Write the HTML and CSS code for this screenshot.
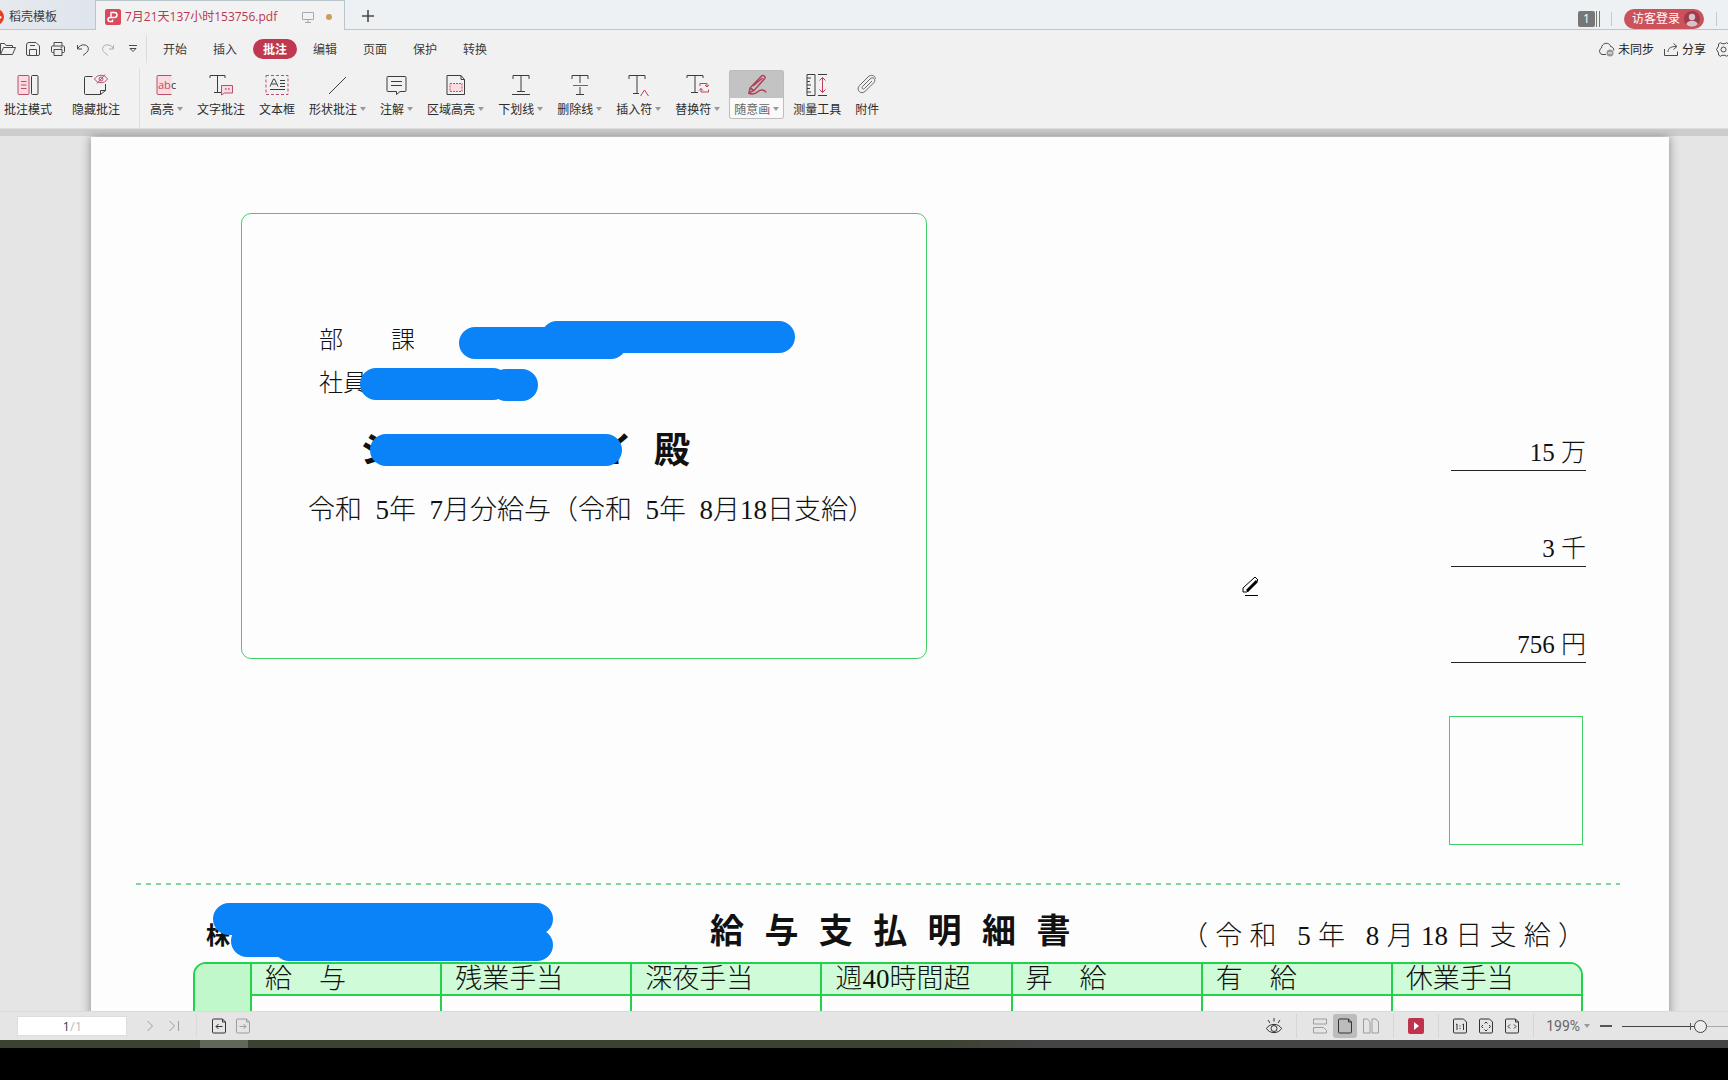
FILE: index.html
```html
<!DOCTYPE html>
<html lang="zh-CN">
<head>
<meta charset="utf-8">
<title>7月21天137小时153756.pdf</title>
<link rel="stylesheet" href="styles.css">
</head>
<body>
<header class="tabbar">
  <button class="tab home"><svg width="4" height="16" viewBox="12 0 4 16"><circle cx="8" cy="8" r="8" fill="#e8401c"/><path d="M12 7l2 1-2 2" fill="#fff"/></svg>稻壳模板</button>
  <button class="tab file">
    <svg width="16" height="16" viewBox="0 0 16 16"><rect width="16" height="16" rx="2" fill="#d94a5c"/><path d="M6 8.500V3.500h3.500a2.500 2.500 0 0 1 0 5H5a2 2 0 0 0 0 4h2.500V10.500" fill="none" stroke="#fff" stroke-width="1.400"/></svg>
    <span class="name">7月21天137小时153756.pdf</span>
    <svg class="screen" width="12" height="12" viewBox="0 0 12 12" fill="none" stroke="#a3a9b0"><path d="M.5 1.500h11v7H.5zM6 8.500v2.500M3 11.500h6"/></svg>
    <i class="dot"></i>
  </button>
  <button class="add" aria-label="新建"><svg width="12" height="12" viewBox="0 0 12 12" stroke="#4a4a4a" stroke-width="1.600"><path d="M6 0v12M0 6h12"/></svg></button>
  <div class="account">
    <span class="count">1</span><i class="bars"></i>
    <i class="vline"></i>
    <button class="login">访客登录<svg width="16" height="16" viewBox="0 0 16 16"><circle cx="8" cy="8" r="8" fill="#a03a50"/><circle cx="8" cy="6" r="3.200" fill="#d9c3cb"/><path d="M2.500 13.500c0-5 11-5 11 0a8 8 0 0 1-11 0z" fill="#d9c3cb"/></svg></button>
    <i class="vline last"></i>
  </div>
</header>

<nav class="menubar">
  <div class="quick">
    <button aria-label="打开"><svg width="16" height="14" viewBox="0 0 16 14"><path d="M.5 12.500V1.500h4l1.500 2h6.500v2M.5 12.500l3-7h12l-3 7z"/></svg></button>
    <button aria-label="保存"><svg width="14" height="14" viewBox="0 0 14 14"><path d="M3 .5h7l3.500 3.500v8a1.500 1.500 0 0 1-1.500 1.500H2A1.500 1.500 0 0 1 .5 12V3A2.500 2.500 0 0 1 3 .5zM4 3.500h5M3.500 13V7.500h7V13"/></svg></button>
    <button aria-label="打印"><svg width="14" height="14" viewBox="0 0 14 14"><path d="M3 4V.5h8V4M3 10.500H1.500a1 1 0 0 1-1-1V5a1 1 0 0 1 1-1h11a1 1 0 0 1 1 1v4.500a1 1 0 0 1-1 1H11M3 7.500h8v6H3zM9.500 5.800h2"/></svg></button>
    <button aria-label="撤销"><svg width="12" height="13" viewBox="0 0 12 13"><path d="M.5 2v4H5M.8 5.500C3 .5 11 .8 11.400 5.500 11.600 9 8.500 10 6 12.500"/></svg></button>
    <button class="off" aria-label="恢复"><svg width="12" height="13" viewBox="0 0 12 13"><path d="M11.500 2v4H7M11.200 5.500C9 .5 1 .8.600 5.500.400 9 3.500 10 6 12.500"/></svg></button>
    <button aria-label="更多"><svg width="8" height="8" viewBox="0 0 8 8"><path d="M0 .5h8M1 3.500h6l-3 3z"/></svg></button>
  </div>
  <div class="menus">
    <button>开始</button><button>插入</button><button class="on">批注</button><button>编辑</button><button>页面</button><button>保护</button><button>转换</button>
  </div>
  <div class="share">
    <button><svg width="17" height="15" viewBox="0 0 17 15"><path d="M8 12.500H4a3.500 3.500 0 0 1-.5-6.500C4 0 12 0 12.500 4.500c2.500.3 3.500 2 3.200 4"/><circle cx="12" cy="11" r="3.500" fill="#999" stroke="none"/><path d="M10 11h4" stroke="#fff"/></svg>未同步</button>
    <button><svg width="15" height="13" viewBox="0 0 15 13"><path d="M.5 6v6.500h13V8.500M4 9c0-4 3-5.500 8-5.500M9.500.5l3.500 3-3.500 3"/></svg>分享</button>
    <button class="gear" aria-label="设置"><svg width="15" height="15" viewBox="0 0 15 15"><path d="M4.500.7l1.500 1h3l1.500-1 2 1.300v2.200L14.500 7.500l-2 3.300v2.200l-2 1.300-1.500-1H6l-1.500 1-2-1.300v-2.200L.5 7.500l2-3.300V2z"/><circle cx="7.500" cy="7.500" r="2.500"/></svg></button>
  </div>
</nav>

<section class="ribbon">
  <div class="group">
    <button class="tool"><svg width="22" height="22" viewBox="0 0 22 22"><rect x="1" y="1.500" width="11" height="19" rx="1" fill="#fbdbe1" stroke="#b8506a"/><path d="M4 7.500h5.500M4 11h5.500M4 14.500h5.500" stroke="#b8506a"/><rect x="14.500" y="1.500" width="6.500" height="19" rx="1"/></svg><span>批注模式</span></button>
    <button class="tool"><svg width="24" height="22" viewBox="0 0 24 22"><path d="M8.500 2.500H1.500a1 1 0 0 0-1 1v16a1 1 0 0 0 1 1h15l5-4V10M16.500 20.500v-4h5"/><g stroke="#b8506a"><path d="M10.500 5c3-5 10-5 13 0-3 5-10 5-13 0zM13 9.500L21 .5"/><circle cx="17" cy="5" r="2"/></g></svg><span>隐藏批注</span></button>
  </div>
  <div class="group">
    <button class="tool"><svg width="22" height="22" viewBox="0 0 22 22"><path d="M15.500 1.500H2a1 1 0 0 0-1 1v17a1 1 0 0 0 1 1h13.500" fill="#fbdbe1" stroke="#b8506a"/><text x="2" y="15" class="abc" fill="#b8506a">ab</text><text x="15" y="15" class="abc" fill="#333">c</text></svg><span>高亮<i class="caret"></i></span></button>
    <button class="tool"><svg width="24" height="22" viewBox="0 0 24 22"><path d="M1 4V1.500h15V4M8.500 1.500v17M5 18.500h7"/><path d="M12.500 11.500h11v7.500h-8l-3 2z" fill="#fbdbe1" stroke="#b8506a"/><path d="M16 15h1.500M19 15h1.500" stroke="#b8506a" stroke-width="1.500"/></svg><span>文字批注</span></button>
    <button class="tool"><svg width="24" height="22" viewBox="0 0 24 22"><rect x="1" y="1.500" width="22" height="19" stroke="#b8506a" stroke-dasharray="3 2"/><path d="M5 12.500L8.500 5h1L13 12.500M6.500 10h5M15 6.500h5M15 9.500h5M15 12.500h5M5 15.500h15"/></svg><span>文本框</span></button>
    <button class="tool"><svg width="20" height="22" viewBox="0 0 20 22"><path d="M1 20L18 3"/></svg><span>形状批注<i class="caret"></i></span></button>
    <button class="tool"><svg width="22" height="22" viewBox="0 0 22 22"><path d="M2 2.500h17a1 1 0 0 1 1 1v13a1 1 0 0 1-1 1h-5l-3.500 3v-3H2a1 1 0 0 1-1-1v-13a1 1 0 0 1 1-1zM5 7.500h11M5 11.500h11"/></svg><span>注解<i class="caret"></i></span></button>
    <button class="tool"><svg width="20" height="22" viewBox="0 0 20 22"><path d="M1 1.500h14l3.500 4v15H1zM15 1.500v4h3.500"/><rect x="4" y="9.500" width="12" height="8" fill="#fbdbe1" stroke="#b8506a" stroke-dasharray="2 1"/></svg><span>区域高亮<i class="caret"></i></span></button>
    <button class="tool"><svg width="18" height="22" viewBox="0 0 18 22"><path d="M1 5V1.500h16V5M9 1.500v16M5 17.500h8M0 20.500h18"/></svg><span>下划线<i class="caret"></i></span></button>
    <button class="tool"><svg width="18" height="22" viewBox="0 0 18 22"><path d="M1 5V1.500h16V5M9 1.500V9M9 13v7M5 20.500h8"/><path d="M2 11.500h15" stroke="#c43c55"/></svg><span>删除线<i class="caret"></i></span></button>
    <button class="tool"><svg width="22" height="22" viewBox="0 0 22 22"><path d="M1 5V1.500h16V5M9 1.500v18M5 19.500h6"/><path d="M12.500 22l4-6 4 6" stroke="#c43c55"/></svg><span>插入符<i class="caret"></i></span></button>
    <button class="tool"><svg width="24" height="22" viewBox="0 0 24 22"><path d="M1 4V1.500h16V4M9 1.500v17M5 18.500h7"/><path d="M14 12V9.500h7V13M19 11l2 2 2-2M22.500 15.500V18H15v-3.500M13 16.500l2-2 2 2" stroke="#c43c55"/></svg><span>替换符<i class="caret"></i></span></button>
    <button class="tool picked"><svg width="22" height="22" viewBox="0 0 22 22"><path d="M3 19l1-5L15.500 2c2-1.500 4.500.5 3 2.800L8 16.500zM4 14l4 2.500M7 12L16.500 4M3 19.500c4 1 7 0 9-2 3-2.500 7-2 8 1" fill="none" stroke="#b0405a" stroke-width="1.500"/></svg><span>随意画<i class="caret"></i></span></button>
    <button class="tool"><svg width="22" height="22" viewBox="0 0 22 22"><path d="M1 .5h8v21H1zM1 4h4M1 7.500h3M1 11h4M1 14.500h3M1 18h4M12 .5h9M12 21.500h9"/><path d="M16.500 3.500v15M13.500 6.500l3-3 3 3M13.500 15.500l3 3 3-3" stroke="#c43c55"/></svg><span>测量工具</span></button>
    <button class="tool"><svg width="20" height="22" viewBox="0 0 20 22"><path d="M15 7l-7.500 7.500c-1.500 1.500-3.500-.5-2-2L13 5c3-3 6.500.5 4 3.500L8.500 17C4 21.500-1.500 16 2.500 11.500L11 3c3-3 7-1.500 7.500 1.500" stroke="#666"/></svg><span>附件</span></button>
  </div>
</section>

<main class="workspace">
  <article class="page" lang="ja">
    <section class="upper">
      <div class="addressee">
        <p class="line">部　　課</p>
        <p class="line">社員</p>
        <p class="person"><span>シ</span><span>イ</span><span>殿</span></p>
        <p class="period">令和&ensp;5年&ensp;7月分給与（令和&ensp;5年&ensp;8月18日支給）</p>
      </div>
      <div class="sums">
        <p class="sum">15 万</p>
        <p class="sum">3 千</p>
        <p class="sum">756 円</p>
        <div class="stamp"></div>
      </div>
    </section>
    <div class="cut"></div>
    <div class="slip-head">
      <p class="company">株</p>
      <h1 class="title">給 与 支 払 明 細 書</h1>
      <p class="paid">（令和&ensp;5年&ensp;8月18日支給）</p>
    </div>
    <table class="slip">
      <thead>
        <tr><td class="side" rowspan="2"></td><th>給　与</th><th>残業手当</th><th>深夜手当</th><th>週40時間超</th><th>昇　給</th><th>有　給</th><th>休業手当</th></tr>
        <tr class="values"><td></td><td></td><td></td><td></td><td></td><td></td><td></td></tr>
      </thead>
    </table>
    <svg class="ink" width="1578" height="874" viewBox="91 137 1578 874" aria-hidden="true">
      <path d="M475 343H611M557 337H779M376 384H493M506 385H522M386 450H606M229 919H537M247 941H290M289 945H537" fill="none" stroke="#0a82f8" stroke-width="32" stroke-linecap="round"/>
      <g><path d="M1243 592v-4l12-11 3 3-11 12z" fill="#fff" stroke="#000"/><path d="M1247 591l10-10" stroke="#000" stroke-width="3"/><path d="M1245 595.500h13" stroke="#000"/></g>
    </svg>
  </article>
</main>

<footer class="status">
  <label class="pageno"><input type="text" value="1" aria-label="页码">/1</label>
  <div class="turn">
    <button class="off" aria-label="下一页"><svg width="6" height="12" viewBox="0 0 6 12"><path d="M.5 1l5 5-5 5"/></svg></button>
    <button class="off" aria-label="末页"><svg width="10" height="12" viewBox="0 0 10 12"><path d="M.5 1l5 5-5 5M9.500 1v10"/></svg></button>
  </div>
  <div class="history">
    <button aria-label="后退"><svg width="14" height="16" viewBox="0 0 14 16"><path d="M1.500 1h9l3 3v10a1 1 0 0 1-1 1h-11a1 1 0 0 1-1-1V2a1 1 0 0 1 1-1zM10.500 1v3h3M4 8.500h6.500M6.500 6L4 8.500 6.500 11"/></svg></button>
    <button class="off" aria-label="前进"><svg width="14" height="16" viewBox="0 0 14 16"><path d="M1.500 1h9l3 3v10a1 1 0 0 1-1 1h-11a1 1 0 0 1-1-1V2a1 1 0 0 1 1-1zM10.500 1v3h3M3.500 8.500H10M7.500 6l2.500 2.500L7.500 11"/></svg></button>
  </div>
  <div class="views">
    <div class="set eye"><button aria-label="护眼"><svg width="16" height="16" viewBox="0 0 16 16"><path d="M.5 10.500c3-5.500 12-5.500 15 0-3 5.500-12 5.500-15 0zM8 0v3.500M2 2l2 3M14 2l-2 3"/><circle cx="8" cy="10.500" r="3"/></svg></button></div>
    <div class="set modes">
      <button class="off" aria-label="连续"><svg width="14" height="16" viewBox="0 0 14 16"><path d="M.5 1h13v5H.5zM.5 9.500h10l3 3V15H.5z"/></svg></button>
      <button class="sel" aria-label="单页"><svg width="14" height="16" viewBox="0 0 14 16"><path d="M1.500 1h9l3 3v10a1 1 0 0 1-1 1h-11a1 1 0 0 1-1-1V2a1 1 0 0 1 1-1zM10.500 1v3h3"/></svg></button>
      <button class="off" aria-label="双页"><svg width="16" height="16" viewBox="0 0 16 16"><path d="M.5 1h4L7 4v11H.5zM9 1h4l2.500 3v11H9z"/></svg></button>
    </div>
    <div class="set play"><button aria-label="播放"><svg width="16" height="16" viewBox="0 0 16 16"><rect width="16" height="16" rx="2" fill="#c0334c" stroke="none"/><path d="M6 4l5 4-5 4z" fill="#fff" stroke="none"/></svg></button></div>
    <div class="set fit">
      <button aria-label="实际大小"><svg width="14" height="16" viewBox="0 0 14 16"><path d="M1.500 1h9l3 3v10a1 1 0 0 1-1 1h-11a1 1 0 0 1-1-1V2a1 1 0 0 1 1-1zM3 6.500l1-.5v6M9.500 6.500l1-.5v6M7 7.500v1M7 10v1"/></svg></button>
      <button aria-label="适合页面"><svg width="14" height="16" viewBox="0 0 14 16"><path d="M1.500 1h9l3 3v10a1 1 0 0 1-1 1h-11a1 1 0 0 1-1-1V2a1 1 0 0 1 1-1zM5.500 5.500L7 4l1.500 1.500M5.500 11.500L7 13l1.500-1.500M4 7L2.500 8.500 4 10M10 7l1.500 1.500L10 10"/></svg></button>
      <button aria-label="适合宽度"><svg width="14" height="16" viewBox="0 0 14 16"><path d="M1.500 1h9l3 3v10a1 1 0 0 1-1 1h-11a1 1 0 0 1-1-1V2a1 1 0 0 1 1-1zM10.500 1v3h3M5 6.500L3 8.500l2 2M9 6.500l2 2-2 2"/></svg></button>
    </div>
    <div class="zoom">
      <button class="percent">199%<i class="caret"></i></button>
      <button aria-label="缩小"><svg width="12" height="4" viewBox="0 0 12 4"><path d="M0 2h12" stroke="#555" stroke-width="2"/></svg></button>
      <input class="slider" type="range" min="0" max="100" value="77" aria-label="缩放">
    </div>
  </div>
</footer>
<div class="taskbar"><i></i></div>
</body>
</html>
```
FILE: styles.css
```css
* { box-sizing: border-box; }
html, body { height: 100%; }
body {
  margin: 0;
  display: flex;
  flex-direction: column;
  overflow: hidden;
  padding-bottom: 32px;
  background: #000;
  color: #3c3c3c;
  font: 12px/16px "Open Sans", "Noto Sans CJK SC", sans-serif;
}
button {
  display: flex;
  align-items: center;
  justify-content: center;
  flex: none;
  margin: 0;
  padding: 0;
  border: 0;
  background: none;
  color: inherit;
  font: inherit;
  white-space: nowrap;
}
svg { display: block; flex: none; }
p, h1 { margin: 0; }
.caret {
  display: inline-block;
  flex: none;
  margin-left: 4px;
  border: 3px solid transparent;
  border-top: 4px solid #999;
  border-bottom: 0;
  vertical-align: 3px;
}

/* Document tabs */
.tabbar {
  display: flex;
  flex: none;
  height: 30px;
  background: #eef1f3;
  box-shadow: inset 0 -1px #b9c6cc;
}
.home {
  width: 95px;
  height: 29px;
  padding-top: 4px;
  justify-content: flex-start;
  gap: 5px;
  background: linear-gradient(90deg, #e6e9ee, #dfe5ed);
}
.file {
  width: 250px;
  padding: 2px 12px 0 9px;
  justify-content: flex-start;
  gap: 4px;
  border: 1px solid #b9c6cc;
  border-bottom: 0;
  background: #f2f2f3;
  color: #b8384e;
}
.screen { margin-left: auto; }
.dot {
  width: 6px;
  height: 6px;
  margin-left: 8px;
  border-radius: 50%;
  background: #c9a054;
}
.add { width: 46px; padding-top: 2px; }
.account {
  display: flex;
  align-items: center;
  margin-left: auto;
  padding: 8px 11px 0 0;
}
.count {
  width: 17px;
  height: 16px;
  border-radius: 2px;
  background: #777;
  color: #fff;
  text-align: center;
}
.bars {
  width: 4px;
  height: 16px;
  border: solid #777;
  border-width: 0 1px;
  margin: 0 11px 0 1px;
}
.vline { width: 1px; height: 14px; background: #c3cace; margin-right: 12px; }
.vline.last { margin: 0 0 0 12px; }
.login {
  width: 80px;
  height: 20px;
  padding-left: 4px;
  gap: 4px;
  border-radius: 10px;
  background: #cb525a;
  color: #fff;
}

/* Menu row */
.menubar {
  display: flex;
  flex: none;
  align-items: center;
  height: 38px;
  background: #f1f1f1;
}
.menubar svg { fill: none; stroke: #4a4a4a; }
.quick {
  display: flex;
  height: 28px;
  padding-right: 1px;
  border-right: 1px solid #dcdcdc;
  gap: 1px;
}
.quick button { width: 24px; }
.quick button:first-child { width: 20px; padding-right: 4px; }
.off { opacity: 0.4; }
.menus { display: flex; gap: 6px; padding-left: 6px; }
.menus button { width: 44px; height: 20px; padding-top: 1px; border-radius: 10px; }
.menus .on { background: #c0384f; color: #fff; font-weight: 700; }
.share { display: flex; gap: 10px; margin-left: auto; padding-top: 1px; color: #222; }
.share button { gap: 3px; }
.gear { width: 12px; overflow: hidden; justify-content: flex-start; }

/* Ribbon */
.ribbon {
  display: flex;
  flex: none;
  height: 61px;
  background: #f1f1f1;
  border-bottom: 1px solid #dedede;
}
.group { display: flex; align-items: flex-start; gap: 4px; padding: 2px 5px 0; }
.group:first-child {
  gap: 10px;
  padding: 2px 13px 0 0;
  border-right: 1px solid #dedede;
}
.tool {
  flex-direction: column;
  justify-content: flex-start;
  gap: 6px;
  height: 49px;
  padding: 4px 5px 0;
  color: #2c2c2c;
}
.group:first-child .tool { padding: 4px 4px 0; margin-right: 2px; }
.tool .caret { margin-left: 3px; }
.tool svg { fill: none; stroke: #3c3c3c; }
.tool .abc { font-size: 11px; stroke: none; }
.picked {
  border-radius: 3px;
  background: linear-gradient(#c3c3c3 28px, #fafafa 28px);
  box-shadow: inset 0 0 0 1px #bdbdbd;
  color: #666;
}

/* Document canvas */
.workspace {
  flex: 1;
  min-height: 0;
  overflow: hidden;
  padding: 8px 59px 0 91px;
  background: linear-gradient(#cdcdcd 7px, #e5e5e5 7px);
}
.page {
  position: relative;
  min-height: 100%;
  background: #fdfdfd;
  box-shadow: 0 0 10px #888;
  color: #111;
  font-family: "Liberation Serif", "Noto Sans CJK JP", serif;
  font-weight: 300;
}
.upper {
  display: flex;
  justify-content: space-between;
  padding: 76px 83px 0 150px;
}
.addressee {
  width: 686px;
  height: 446px;
  padding-top: 105px;
  border: 1px solid #41cf66;
  border-radius: 10px;
}
.line { padding-left: 77px; font-size: 24px; line-height: 43px; }
.person {
  display: flex;
  padding: 4px 0 0 118px;
  font-size: 36px;
  font-weight: 700;
  line-height: 84px;
}
.person span:nth-child(2) { margin: 0 22px 0 200px; }
.period { padding-left: 66px; font-size: 27px; line-height: 34px; }
.sums {
  display: flex;
  flex-direction: column;
  align-items: flex-end;
  gap: 61px;
  width: 137px;
  padding-top: 223px;
}
.sum {
  width: 135px;
  border-bottom: 1px solid #222;
  font-size: 25px;
  line-height: 34px;
  text-align: right;
}
.stamp {
  align-self: flex-start;
  width: 134px;
  height: 129px;
  margin-top: -8px;
  border: 1px solid #41cf66;
}
.cut {
  height: 2px;
  margin: 38px 49px 0 45px;
  background: repeating-linear-gradient(90deg, #82d69b 0 5px, transparent 5px 10px);
}
.slip-head {
  display: flex;
  align-items: center;
  height: 77px;
  padding: 20px 84px 0 115px;
}
.company { width: 504px; font-size: 24px; font-weight: 700; padding-top: 4px; line-height: 26px; }
.title {
  margin-right: auto;
  font: 700 34px/50px "Liberation Mono", "Noto Sans CJK JP", monospace;
}
.paid {
  width: 404px;
  padding-top: 4px;
  font-size: 27px;
  line-height: 36px;
  text-align: justify;
  text-align-last: justify;
}
.slip {
  width: calc(100% - 188px);
  margin-left: 102px;
  table-layout: fixed;
  border-collapse: separate;
  border-spacing: 0;
  border: 2px solid #24d04c;
  border-radius: 13px 13px 0 0;
  overflow: hidden;
}
.slip td, .slip th { padding: 0; border-left: 2px solid #24d04c; }
.slip th {
  height: 32px;
  padding: 1px 0 0 13px;
  border-bottom: 2px solid #24d04c;
  background: #d0fbd8;
  font-size: 27px;
  font-weight: 300;
  line-height: 29px;
  text-align: left;
  white-space: nowrap;
}
.slip .side { width: 55px; border-left: 0; background: #c1f8cb; }
.values td { height: 60px; }
.ink { position: absolute; left: 0; top: 0; }

/* Status bar */
.status {
  display: flex;
  flex: none;
  align-items: center;
  height: 29px;
  padding-left: 17px;
  background: #e5e5e5;
  border-top: 1px solid #dadada;
}
.status svg { fill: none; stroke: #333; }
.pageno {
  display: flex;
  align-items: center;
  width: 110px;
  height: 20px;
  border: 1px solid #ddd;
  background: #fff;
  color: #bbb;
  font: 13px/18px "Open Sans", sans-serif;
}
.pageno input {
  width: 52px;
  height: 18px;
  padding: 0;
  border: 0;
  background: none;
  color: #444;
  font: inherit;
  text-align: right;
}
.turn { display: flex; gap: 16px; padding: 0 17px 0 20px; }
.history {
  display: flex;
  gap: 10px;
  padding-left: 15px;
  border-left: 1px solid #dadada;
}
.history, .set { height: 24px; align-items: center; }
.views { display: flex; align-items: center; margin-left: auto; }
.set { display: flex; border-right: 1px solid #d6d6d6; }
.eye { padding-right: 14px; }
.modes { gap: 6px; padding: 0 14px 0 16px; }
.sel {
  width: 24px;
  height: 24px;
  border-radius: 3px;
  background: #bcbcbc;
}
.play { padding: 0 14px; }
.fit { gap: 12px; padding: 0 14px; }
.zoom { display: flex; align-items: center; padding-left: 12px; }
.percent { margin-right: 10px; color: #666; font: 14px/18px Roboto, sans-serif; }
.slider {
  appearance: none;
  width: 106px;
  height: 14px;
  margin: 0 0 0 10px;
  background:
    linear-gradient(#555, #555) 68px 4px / 1px 7px no-repeat,
    linear-gradient(90deg, #444 75px, #aaa 75px) 0 7px / 100% 1px no-repeat;
}
.slider::-webkit-slider-thumb {
  appearance: none;
  width: 13px;
  height: 13px;
  border: 1px solid #444;
  border-radius: 50%;
  background: #eee;
}
.taskbar {
  display: flex;
  flex: none;
  height: 8px;
  padding-left: 200px;
  background: linear-gradient(90deg, #3c4230 55%, #444 60%);
}
.taskbar i { width: 48px; background: #626858; }
```
